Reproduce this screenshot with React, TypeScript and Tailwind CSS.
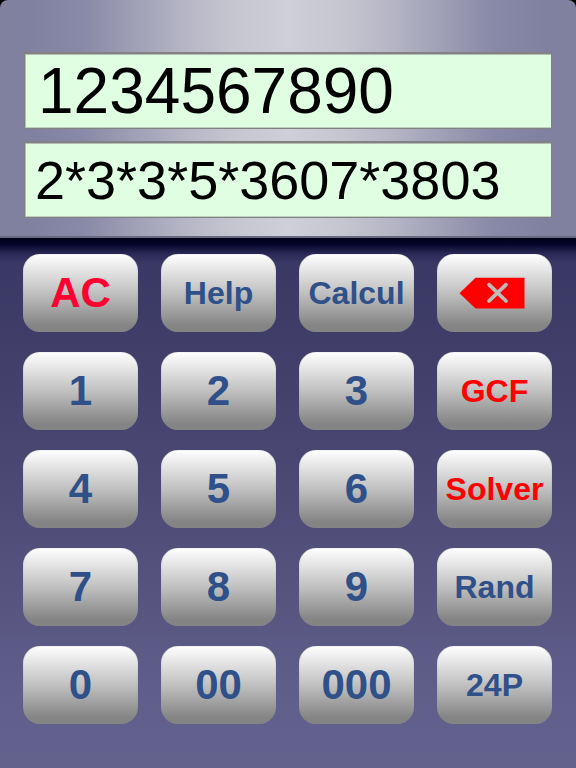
import { useState } from "react";
import type { ReactNode } from "react";

type Tone = "blue" | "red" | "crimson";
type Size = "large" | "small";

interface Key {
  label: string;
  size: Size;
  tone: Tone;
  face?: ReactNode;
}

const tones: Record<Tone, string> = {
  blue: "text-[#2f5089]",
  red: "text-[#ff0000]",
  crimson: "text-[#ff0030]",
};

const sizes: Record<Size, string> = {
  large: "text-[42px]",
  small: "text-[32px]",
};

function BackspaceIcon() {
  return (
    <svg width="72" height="32" viewBox="0 0 72 32" aria-hidden="true">
      <path d="M0.5 16.2 16.5 0.7H65.5V31.5H16.5Z" fill="#ff0000" />
      <path
        d="M30 7.7 47 24M47 7.7 30 24"
        stroke="#bcbcbc"
        strokeWidth="3.8"
        strokeLinecap="round"
      />
    </svg>
  );
}

const keys: Key[] = [
  { label: "AC", size: "large", tone: "crimson" },
  { label: "Help", size: "small", tone: "blue" },
  { label: "Calcul", size: "small", tone: "blue" },
  { label: "Backspace", size: "small", tone: "red", face: <BackspaceIcon /> },
  { label: "1", size: "large", tone: "blue" },
  { label: "2", size: "large", tone: "blue" },
  { label: "3", size: "large", tone: "blue" },
  { label: "GCF", size: "small", tone: "red" },
  { label: "4", size: "large", tone: "blue" },
  { label: "5", size: "large", tone: "blue" },
  { label: "6", size: "large", tone: "blue" },
  { label: "Solver", size: "small", tone: "red" },
  { label: "7", size: "large", tone: "blue" },
  { label: "8", size: "large", tone: "blue" },
  { label: "9", size: "large", tone: "blue" },
  { label: "Rand", size: "small", tone: "blue" },
  { label: "0", size: "large", tone: "blue" },
  { label: "00", size: "large", tone: "blue" },
  { label: "000", size: "large", tone: "blue" },
  { label: "24P", size: "small", tone: "blue" },
];

const fieldClass =
  "block h-[77px] w-full border border-t-2 border-[#828282] bg-[#e0ffe2] text-black shadow-[inset_0_1px_0_#b4bdb4,inset_1px_0_0_#b4bdb4,inset_0_-1px_0_#c0d0c0] outline-none";

export default function App() {
  const [value, setValue] = useState("1234567890");

  const press = (label: string) => {
    if (label === "AC") setValue("");
    else if (label === "Backspace") setValue((v) => v.slice(0, -1));
    else if (/^\d+$/.test(label)) setValue((v) => v + label);
  };

  return (
    <main className="flex min-h-screen flex-col bg-black font-['Liberation_Sans',Arial,sans-serif]">
      <header className="flex flex-col gap-3 rounded-t-lg border-b-2 border-[#68687f] bg-[linear-gradient(90deg,#80809f_0%,#8080a0_5%,#8888a8_14%,#9797b0_20%,#b3b3c4_31%,#c5c5d0_40%,#cfcfd9_50%,#c5c5d0_60%,#b3b3c4_69%,#9797b0_80%,#8888a8_86%,#8080a0_95%,#80809f_100%)] px-6 pt-[52px] pb-[18px]">
        <input
          aria-label="Number"
          className={`${fieldClass} px-[13px] text-[64px]`}
          value={value}
          onChange={(e) => setValue(e.target.value)}
        />
        <input
          aria-label="Prime factors"
          className={`${fieldClass} px-[10px] text-[54px]`}
          defaultValue="2*3*3*5*3607*3803"
        />
      </header>
      <section
        aria-label="Keypad"
        className="grow bg-[linear-gradient(180deg,#000018_0px,#04042a_6px,#2b2a56_16px,#3a3864_25px,#3f3d68_90px,#4a4872_230px,#5a5883_390px,#605f8c_460px,#63628d_530px)] pt-4 pr-6 pb-11 pl-[23px]"
      >
        <div className="grid grid-cols-4 gap-x-[23px] gap-y-5">
          {keys.map((key) => (
            <button
              key={key.label}
              type="button"
              aria-label={key.face ? key.label : undefined}
              onClick={() => press(key.label)}
              className={`flex h-[78px] items-center justify-center rounded-[17px] bg-[linear-gradient(180deg,#ffffff_0%,#c0c0c0_50%,#848484_92%,#848484_100%)] leading-none font-bold shadow-[inset_0_0_1px_#8c8c9c] ${sizes[key.size]} ${tones[key.tone]}`}
            >
              {key.face ?? key.label}
            </button>
          ))}
        </div>
      </section>
    </main>
  );
}
